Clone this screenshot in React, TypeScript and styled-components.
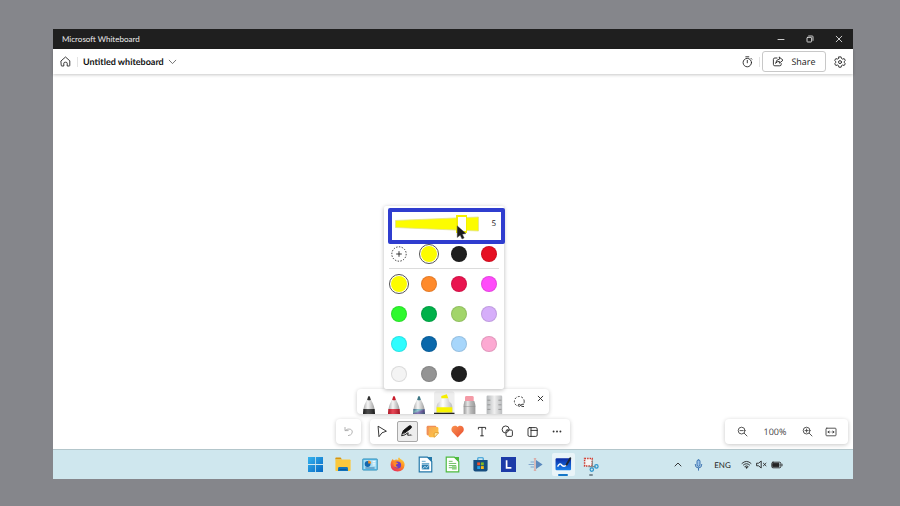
import React from "react";
import styled, { createGlobalStyle, css } from "styled-components";

const GlobalStyle = createGlobalStyle`
  * { box-sizing: border-box; }
  body {
    margin: 0;
    background: #85868b;
    font-family: "Open Sans", "Noto Sans", sans-serif;
    text-rendering: geometricPrecision;
    color: #242424;
  }
  button, input { font: inherit; color: inherit; margin: 0; text-rendering: inherit; }
  button { padding: 0; border: 0; background: none; cursor: pointer; }
`;

const Desktop = styled.div`
  min-height: 100vh;
  display: flex;
  padding: 29px 47px 27px 53px;
`;

const Screen = styled.div`
  flex: 1;
  min-width: 0;
  display: flex;
  flex-direction: column;
  background: #fff;
`;

const TitleBar = styled.header`
  display: flex;
  align-items: center;
  justify-content: space-between;
  height: 20px;
  padding: 0 0 0 9px;
  background: #1f1f1f;
  color: #ececec;
  font-family: Lato, "Open Sans", sans-serif;
  font-size: 8px;
  line-height: 12px;
`;

const WindowControls = styled.div`
  display: flex;
`;

const WindowButton = styled.button`
  width: 29px;
  height: 20px;
  display: grid;
  place-items: center;
  color: #e0e0e0;
`;

const AppHeader = styled.div`
  display: flex;
  align-items: center;
  height: 25px;
  padding: 0 5px 0 4px;
  background: #fff;
  box-shadow: 0 1px 3px rgba(0, 0, 0, 0.22);
`;

const HeaderGroup = styled.div<{ $end?: boolean }>`
  display: flex;
  align-items: center;
  margin-left: ${(p) => (p.$end ? "auto" : "0")};
`;

const IconButton = styled.button`
  width: 16px;
  height: 20px;
  display: grid;
  place-items: center;
`;

const Divider = styled.span<{ $tight?: boolean }>`
  width: 1px;
  height: 10px;
  margin: 0 ${(p) => (p.$tight ? 2 : 5)}px 0 4px;
  background: #e3e3e3;
`;

const BoardName = styled.button`
  display: flex;
  align-items: center;
  gap: 4px;
  font-family: Lato, "Open Sans", sans-serif;
  font-size: 9px;
  line-height: 14px;
  font-weight: 700;
  color: #111;
`;

const ShareButton = styled.button`
  display: flex;
  align-items: center;
  justify-content: center;
  gap: 7px;
  width: 64px;
  height: 21px;
  margin-right: 6px;
  border: 1px solid #c8c8c8;
  border-radius: 3px;
  font-size: 9px;
  line-height: 14px;
`;

const Canvas = styled.main`
  flex: 1;
  display: grid;
  grid-template-columns: 1fr auto 1fr;
  align-items: end;
  padding: 5px;
`;

const Dock = styled.div`
  grid-column: 2;
  display: flex;
  flex-direction: column;
  align-items: center;
`;

const floating = css`
  background: #fff;
  border-radius: 4px;
  box-shadow: 0 1px 4px rgba(0, 0, 0, 0.22);
`;

const PenPanel = styled.section`
  position: relative;
  z-index: 1;
  align-self: flex-start;
  width: 120px;
  margin-left: 48px;
  background: #fff;
  border-radius: 2px;
  box-shadow: 0 1px 4px rgba(0, 0, 0, 0.28);
`;

const SizeRow = styled.div`
  display: flex;
  align-items: center;
  height: 33px;
  padding: 3px 8px 0 11px;
  font-size: 8px;
  line-height: 12px;
`;

const SizeSlider = styled.div`
  display: grid;
  align-items: center;
  width: 84px;
  margin-right: auto;
  > * { grid-area: 1 / 1; }
`;

const SizeInput = styled.input`
  appearance: none;
  width: 84px;
  height: 18px;
  background: transparent;
  &::-webkit-slider-thumb {
    appearance: none;
    width: 11px;
    height: 18px;
    border: 2px solid #f4f000;
    border-right-width: 1px;
    background: #fff;
  }
`;

const SwatchGrid = styled.div<{ $divided?: boolean }>`
  display: grid;
  grid-template-columns: repeat(4, 1fr);
  grid-auto-rows: 30px;
  place-items: center;
  ${(p) =>
    p.$divided &&
    css`
      background: linear-gradient(#dcdcdc, #dcdcdc) center bottom / 110px 1px no-repeat;
    `}
`;

const Swatch = styled.input<{ $color: string }>`
  appearance: none;
  width: 16px;
  height: 16px;
  border-radius: 50%;
  border: 1px solid rgba(0, 0, 0, 0.1);
  background-color: ${(p) => p.$color};
  &:checked {
    width: 20px;
    height: 20px;
    padding: 1px;
    border-color: #555;
    background-clip: content-box;
  }
`;

const AddSwatch = styled.button`
  width: 16px;
  height: 16px;
  display: grid;
  place-items: center;
`;

const SizeHighlight = styled.div`
  position: absolute;
  left: 4px;
  top: 2px;
  width: 117px;
  height: 36px;
  border: 4px solid #2f3dcf;
  border-radius: 2px;
  pointer-events: none;
`;

const Pointer = styled.svg`
  position: absolute;
  left: 72px;
  top: 19px;
`;

const PenTray = styled.div`
  ${floating}
  display: flex;
  height: 25px;
  margin-bottom: 5px;
  overflow: hidden;
`;

const Tool = styled.button`
  width: 25px;
  height: 25px;
  display: grid;
  place-items: center;
`;

const CloseTray = styled.button`
  width: 17px;
  height: 18px;
  display: grid;
  place-items: center;
`;

const ToolRow = styled.div`
  display: flex;
  gap: 9px;
`;

const ToolBar = styled.div`
  ${floating}
  display: flex;
`;

const ToolFace = styled.span<{ $active?: boolean }>`
  width: 21px;
  height: 21px;
  display: grid;
  place-items: center;
  border-radius: 2px;
  border: 1px solid ${(p) => (p.$active ? "#a8a8a8" : "transparent")};
  background: ${(p) => (p.$active ? "#ededed" : "transparent")};
`;

const ZoomBar = styled.div`
  ${floating}
  grid-column: 3;
  justify-self: end;
  display: flex;
  align-items: center;
  justify-content: space-between;
  width: 123px;
  height: 25px;
  padding: 0 9px;
  font-size: 9px;
  line-height: 14px;
  color: #444;
`;

const ZoomGroup = styled.div`
  display: flex;
  gap: 7px;
`;

const TaskBar = styled.footer`
  display: grid;
  grid-template-columns: 1fr 303px 1fr;
  align-items: center;
  height: 30px;
  border-top: 1px solid #b3c6cb;
  background: #cfe7ee;
`;

const AppIcons = styled.nav`
  grid-column: 2;
  display: grid;
  grid-template-columns: repeat(11, 1fr);
  justify-items: center;
`;

const AppIcon = styled.button<{ $state?: "open" | "running" }>`
  position: relative;
  width: 23px;
  height: 23px;
  display: grid;
  place-items: center;
  border-radius: 2px;
  background: ${(p) => (p.$state === "open" ? "#e9f4f8" : "transparent")};
  ${(p) =>
    p.$state &&
    css`
      &::after {
        content: "";
        position: absolute;
        bottom: 0;
        width: ${p.$state === "open" ? 10 : 4}px;
        height: 2px;
        border-radius: 1px;
        background: ${p.$state === "open" ? "#1577c8" : "#7a8d96"};
      }
    `}
`;

const SystemTray = styled.div`
  grid-column: 3;
  display: flex;
  align-items: center;
  justify-content: flex-end;
  padding-right: 67px;
  font-family: Lato, "Open Sans", sans-serif;
  font-size: 8px;
  line-height: 12px;
`;

const TrayItem = styled.button<{ $wide: number }>`
  width: ${(p) => p.$wide}px;
  height: 20px;
  display: grid;
  place-items: center;
`;

const Line = styled.svg.attrs({ fill: "none", stroke: "currentColor", strokeLinecap: "round", strokeLinejoin: "round" })`
  display: block;
  stroke-width: 0.9;
`;

const Art = styled.svg`
  display: block;
`;

function Pen({ id, body, tip }: { id: string; body: string; tip: string }) {
  return (
    <Art width="25" height="25" viewBox="0 0 25 25">
      <defs>
        <linearGradient id={id}>
          <stop offset="0" stopColor="#adadad" />
          <stop offset=".4" stopColor="#f6f6f6" />
          <stop offset="1" stopColor="#9c9c9c" />
        </linearGradient>
        <linearGradient id="galaxy" x2="1" y2="1">
          <stop offset="0" stopColor="#3d6f9e" />
          <stop offset=".35" stopColor="#7ec4c9" />
          <stop offset=".6" stopColor="#6a51a8" />
          <stop offset="1" stopColor="#44708f" />
        </linearGradient>
        <linearGradient id="shade">
          <stop offset="0" stopColor="#000" stopOpacity=".25" />
          <stop offset=".4" stopColor="#fff" stopOpacity=".2" />
          <stop offset="1" stopColor="#000" stopOpacity=".3" />
        </linearGradient>
      </defs>
      <path d="M10.2 10.2 8 14.8Q6.8 17.4 6.4 20.2H17.6Q17.2 17.4 16 14.8L13.8 10.2Z" fill={`url(#${id})`} />
      <path d="M10.1 10.8 11.2 7.6Q12 6.2 12.8 7.6L13.9 10.8Q12 11.8 10.1 10.8Z" fill={tip} />
      <path d="M6.4 20H17.6L18 25H6Z" fill={body} />
      <path d="M6.4 20H17.6L18 25H6Z" fill="url(#shade)" />
    </Art>
  );
}

const Highlighter = () => (
  <Art width="25" height="25" viewBox="0 0 25 25">
    <defs>
      <linearGradient id="hl">
        <stop offset="0" stopColor="#c9c9c9" />
        <stop offset=".4" stopColor="#fff" />
        <stop offset="1" stopColor="#bdbdbd" />
      </linearGradient>
    </defs>
    <rect x="2" y="2.5" width="20.5" height="22.5" rx="2" fill="#eeeeee" />
    <path d="M9.3 9.6V7L14.8 5.2 16.4 9.6Z" fill="#f6ee00" />
    <path d="M8.6 9.4H16.4L17.2 12.6Q20 14.2 20.3 17V25H4.6V17Q4.8 14.2 7.8 12.6Z" fill="url(#hl)" />
    <path d="M4.6 18.3H20.3V23.6H4.6Z" fill="#f8f400" />
    <path d="M2 23.8H22.5V25H2Z" fill="#222" />
  </Art>
);

const Eraser = () => (
  <Art width="25" height="25" viewBox="0 0 25 25">
    <defs>
      <linearGradient id="metal">
        <stop offset="0" stopColor="#9a9a9a" />
        <stop offset=".35" stopColor="#e6e6e6" />
        <stop offset=".6" stopColor="#bababa" />
        <stop offset="1" stopColor="#989898" />
      </linearGradient>
    </defs>
    <path d="M8 12.5V8.4Q8 7 9.4 7H15.2Q16.7 7 16.7 8.4V12.5Z" fill="#f49aa6" />
    <path d="M7.4 12H17.3L18.4 16V25H6.6V16Z" fill="url(#metal)" />
    <path d="M6.6 17.5H18.4" stroke="#8c8c8c" strokeWidth=".5" />
  </Art>
);

const Ruler = () => (
  <Art width="25" height="25" viewBox="0 0 25 25">
    <defs>
      <linearGradient id="rule">
        <stop offset="0" stopColor="#b4b7b9" />
        <stop offset=".5" stopColor="#efefef" />
        <stop offset="1" stopColor="#babcbe" />
      </linearGradient>
    </defs>
    <rect x="4.6" y="6.6" width="15.6" height="19" rx="1.2" fill="url(#rule)" />
    <path d="M5.4 11.2h3M5.4 15.8h3M5.4 20.4h3M16.4 11.2h3M16.4 15.8h3M16.4 20.4h3" stroke="#8a8a8a" strokeWidth=".8" />
  </Art>
);

const Lasso = () => (
  <Line width="25" height="25" viewBox="0 0 25 25">
    <circle cx="12.3" cy="12.4" r="4.9" strokeDasharray="2 1.5" strokeLinecap="butt" />
    <path d="M10.6 13.8h6.4v4.4h-6.4z" fill="#fff" stroke="none" />
    <path d="M16.6 15.1Q14.4 15 13.4 16.4T11.6 17.2Q10.8 16.2 11.6 15.4T13.4 16.2Q14.6 17.8 16.6 17.6" />
  </Line>
);

const toolIcons: { label: string; active?: boolean; icon: React.ReactNode }[] = [
  { label: "Select", icon: <Line width="13" height="13" viewBox="0 0 13 13"><path d="M2.4 1.4 10.4 6.2 6 7.8 3.2 11.4Z" /></Line> },
  {
    label: "Inking",
    active: true,
    icon: (
      <Line width="15" height="15" viewBox="0 0 15 15">
        <path d="M2.4 9 3.4 6.6 9 2Q10.4 1.2 11.2 2.2T10.8 4.4L5 8.8Z" fill="#111" stroke="#111" />
        <path d="M2.4 9.2 1.6 11.8Q5 11.4 7.6 9 8.8 8.2 7.8 10T9.4 11.2 11.8 11" stroke="#111" />
      </Line>
    ),
  },
  {
    label: "Notes",
    icon: (
      <Art width="13" height="13" viewBox="0 0 13 13">
        <defs><linearGradient id="note" x2="1" y2="1"><stop offset="0" stopColor="#f6a552" /><stop offset="1" stopColor="#ffc943" /></linearGradient></defs>
        <path d="M2 .8H9Q10.4.8 10.4 2.2V10.4H2Q.6 10.4.6 9V2.2Q.6.8 2 .8Z" fill="#f08f57" />
        <path d="M4 2H11Q12.4 2 12.4 3.4V8L8.6 12.2H4Q2.6 12.2 2.6 10.8V3.4Q2.6 2 4 2Z" fill="url(#note)" />
        <path d="M12.4 7.6H9.4Q8.2 7.6 8.2 8.8V12.2H8.6L12.4 8.2Z" fill="#ffe89a" stroke="#d98a1c" strokeWidth=".7" />
      </Art>
    ),
  },
  {
    label: "Reactions",
    icon: (
      <Art width="14" height="13" viewBox="0 0 14 13">
        <defs><linearGradient id="heart" x2="1" y2="1"><stop offset="0" stopColor="#f9944f" /><stop offset="1" stopColor="#e84a30" /></linearGradient></defs>
        <path d="M6.6 2.1C5.4.2 2.8.2 1.4 1.8-.1 3.6.2 6 1.6 7.2L6.6 12.4 11.6 7.2C13 6 13.3 3.6 11.8 1.8 10.4.2 7.8.2 6.6 2.1Z" fill="url(#heart)" />
      </Art>
    ),
  },
  { label: "Text", icon: <Line width="11" height="11" viewBox="0 0 11 11"><path d="M1.4 3V1.4H8.6V3M5 1.4V9.8M3.6 9.8H6.4" /></Line> },
  {
    label: "Shapes",
    icon: (
      <Line width="13" height="13" viewBox="0 0 13 13">
        <path d="M4.2 8.1A3.6 3.6 0 1 1 8.3 4.2" />
        <rect x="5" y="5" width="6.4" height="6.4" rx="1.2" />
        <path d="M5 7.6A3.4 3.4 0 0 0 8 5" />
      </Line>
    ),
  },
  { label: "Templates", icon: <Line width="12" height="12" viewBox="0 0 12 12"><rect x="1" y="1.6" width="9.2" height="8.8" rx="1.4" /><path d="M4 1.6V10.4M4 4.4H10.2" /></Line> },
  { label: "More options", icon: <Art width="11" height="3" viewBox="0 0 11 3" fill="#333"><circle cx="1.6" cy="1.5" r=".95" /><circle cx="5" cy="1.5" r=".95" /><circle cx="8.4" cy="1.5" r=".95" /></Art> },
];

const doc = (color: string, inner: React.ReactNode) => (
  <Art width="15" height="17" viewBox="1 0 13 16">
    <path d="M1.6 1H9.2L13.4 5.2V15H1.6Z" fill="#fff" stroke={color} strokeWidth="1.1" />
    <path d="M9 1H13.6V5.4Z" fill={color} />
    {inner}
  </Art>
);

const apps: { label: string; state?: "open" | "running"; icon: React.ReactNode }[] = [
  {
    label: "Start",
    icon: (
      <Art width="15" height="15" viewBox="0 0 15 15">
        <defs><linearGradient id="win" x2="1" y2="1"><stop offset="0" stopColor="#35b3ee" /><stop offset="1" stopColor="#0669c4" /></linearGradient></defs>
        <path d="M0 0H7.1V7.1H0ZM7.9 0H15V7.1H7.9ZM0 7.9H7.1V15H0ZM7.9 7.9H15V15H7.9Z" fill="url(#win)" />
      </Art>
    ),
  },
  {
    label: "File Explorer",
    icon: (
      <Art width="16" height="15" viewBox="0 0 16 15">
        <path d="M.4 1.2Q.4.6 1 .6H5.6L7 2.4H.4Z" fill="#d8950c" />
        <path d="M.4 2.4H14.8Q15.6 2.4 15.6 3.2V13.2Q15.6 14 14.8 14H1.2Q.4 14 .4 13.2Z" fill="#fbc83c" />
        <path d="M3 14V11.4Q3 10 4.4 10H11.6Q13 10 13 11.4V14Z" fill="#1274bd" />
        <path d="M4.4 12.6H11.6" stroke="#064c86" strokeWidth=".7" />
      </Art>
    ),
  },
  {
    label: "Control Panel",
    icon: (
      <Art width="16" height="13" viewBox="0 0 16 13">
        <rect x=".5" y=".8" width="15" height="11.4" rx="1" fill="#4fb5e4" stroke="#4796b9" strokeWidth=".7" />
        <rect x="1.6" y="2" width="12.8" height="9" fill="#a7ddf3" />
        <circle cx="5.6" cy="6" r="2.9" fill="#1467ad" />
        <path d="M6.2 5.4V2.4A3 3 0 0 1 9.2 5.4Z" fill="#f18a26" />
        <path d="M10.6 3.4H13.4M10.6 5.2H13.4M10.6 7H13.4" stroke="#fff" strokeWidth=".9" />
        <path d="M3.4 10H12.6" stroke="#3474a8" strokeWidth="1" />
      </Art>
    ),
  },
  {
    label: "Firefox",
    icon: (
      <Art width="15" height="15" viewBox="0 0 15 15">
        <defs>
          <linearGradient id="fox" x1=".8" y1="0" x2=".2" y2="1"><stop offset="0" stopColor="#ffd83b" /><stop offset=".45" stopColor="#ff8a22" /><stop offset="1" stopColor="#e72360" /></linearGradient>
        </defs>
        <path d="M1.4 4 2.6 2 4 3.4Q6 2 8.4 3 7.6 1.2 9 .2 10 2 11.6 2.8 14.8 4.6 14.6 8.2 14 14.2 7.6 14.6 1 14.2.6 8Q.6 5.4 1.4 4Z" fill="url(#fox)" />
        <circle cx="7.6" cy="8" r="3.5" fill="#6c3cc4" />
        <path d="M3.2 5.2Q5.4 4.4 6.8 5.6L8.2 6.4Q7 7.2 6 7.4 5.6 9.6 8.4 10 5 11.6 3.8 8.8Z" fill="#ff8b25" />
      </Art>
    ),
  },
  { label: "LibreOffice Writer", icon: doc("#2277a8", <><path d="M4 5H7.6M4 7H11" stroke="#4f9bc4" strokeWidth=".8" /><rect x="4" y="8" width="7" height="4.6" fill="#2d7fb0" /><path d="M4.6 12 7 9.8 8.4 11 10.6 9" stroke="#d9f0fa" strokeWidth=".8" fill="none" /></>) },
  { label: "LibreOffice Calc", icon: doc("#4dbb3e", <><path d="M4 5H7.6M4 7H11M4 9H11M4 11H11" stroke="#68bd5c" strokeWidth=".9" /><rect x="7" y="9.6" width="4.4" height="3.2" fill="#8fd184" /></>) },
  {
    label: "Microsoft Store",
    icon: (
      <Art width="15" height="15" viewBox="0 0 15 15">
        <path d="M4.8 3V1.4Q4.8.8 5.4.8H9.6Q10.2.8 10.2 1.4V3" fill="none" stroke="#2e9ad6" strokeWidth="1.1" />
        <path d="M.4 3H14.6V12.6Q14.6 14.6 12.6 14.6H2.4Q.4 14.6.4 12.6Z" fill="#164e80" />
        <path d="M4.2 5.4H7.1V8.3H4.2Z" fill="#f0502a" /><path d="M7.9 5.4H10.8V8.3H7.9Z" fill="#82bb23" />
        <path d="M4.2 9.1H7.1V12H4.2Z" fill="#22a2ea" /><path d="M7.9 9.1H10.8V12H7.9Z" fill="#fbb915" />
      </Art>
    ),
  },
  { label: "L", icon: <Art width="15" height="15" viewBox="0 0 15 15"><rect width="15" height="15" fill="#1c3ba8" /><path d="M5.6 3.2V10.8H10.4" fill="none" stroke="#fff" strokeWidth="1.7" /></Art> },
  {
    label: "Media tool",
    icon: (
      <Art width="15" height="13" viewBox="0 0 15 13">
        <path d="M8 2 14.6 6.5 8 11Z" fill="#5b89bd" />
        <path d="M2.6 4H6M.6 6.5H6M2.6 9H6" stroke="#82a6cd" strokeWidth="1.1" />
        <path d="M7 .8V12.2M5.8.8H8.2M5.8 12.2H8.2" stroke="#dc9b94" strokeWidth="1.1" />
      </Art>
    ),
  },
  {
    label: "Microsoft Whiteboard",
    state: "open",
    icon: (
      <Art width="17" height="15" viewBox="0 0 16 14">
        <defs><linearGradient id="wb" x2="0" y2="1"><stop offset="0" stopColor="#0a2aa4" /><stop offset="1" stopColor="#1b80ea" /></linearGradient></defs>
        <rect x=".5" y="1.2" width="14.6" height="11.2" rx="1" fill="url(#wb)" />
        <path d="M2.4 9Q4.6 5.2 5.8 7T8.6 8.6 11 7.4" fill="none" stroke="#fff" strokeWidth="1.3" />
        <path d="M10.8 7.2 14.4 1.2" stroke="#1f2733" strokeWidth="1.8" strokeLinecap="round" />
      </Art>
    ),
  },
  {
    label: "Snipping Tool",
    state: "running",
    icon: (
      <Art width="16" height="16" viewBox="0 0 16 16">
        <rect x="1.6" y="1.4" width="7.6" height="7.6" fill="#f5f5f5" stroke="#cf3b2f" strokeWidth="1.5" strokeDasharray="1.5 1" />
        <path d="M9.4 3.6V10.4M5.6 9.6H12.6" stroke="#888" strokeWidth="1.1" />
        <circle cx="8.8" cy="12.6" r="1.7" fill="none" stroke="#2a94cc" strokeWidth="1.2" />
        <circle cx="13.4" cy="9.4" r="1.7" fill="none" stroke="#2a94cc" strokeWidth="1.2" />
      </Art>
    ),
  },
];

const palette: [string, string][] = [
  ["Yellow", "#fcfc00"], ["Orange", "#ff8a2b"], ["Crimson", "#e9144f"], ["Magenta", "#ff4bfa"],
  ["Lime", "#2df92d"], ["Green", "#00b14a"], ["Light green", "#a2d56a"], ["Lavender", "#d6aefa"],
  ["Cyan", "#2dfdff"], ["Blue", "#0a68ab"], ["Light blue", "#a7d6fb"], ["Pink", "#fca9d2"],
  ["White", "#f4f4f4"], ["Gray", "#949494"], ["Black", "#1f1f1f"],
];

const recent: [string, string][] = [["Yellow", "#fcfc00"], ["Black", "#1f1f1f"], ["Red", "#e60f22"]];

export default function App() {
  return (
    <>
      <GlobalStyle />
      <Desktop>
        <Screen>
          <TitleBar>
            <span>Microsoft Whiteboard</span>
            <WindowControls>
              <WindowButton aria-label="Minimize"><Line width="8" height="8" viewBox="0 0 8 8"><path d="M1 4.5H7" /></Line></WindowButton>
              <WindowButton aria-label="Restore"><Line width="8" height="8" viewBox="0 0 8 8"><rect x="1" y="2.4" width="4.6" height="4.6" rx=".6" /><path d="M2.6 1H6.2Q7 1 7 1.8V5.4" /></Line></WindowButton>
              <WindowButton aria-label="Close"><Line width="8" height="8" viewBox="0 0 8 8"><path d="M1.2 1.2 6.8 6.8M6.8 1.2 1.2 6.8" /></Line></WindowButton>
            </WindowControls>
          </TitleBar>
          <AppHeader>
            <HeaderGroup>
              <IconButton aria-label="Home">
                <Line width="11" height="11" viewBox="0 0 11 11"><path d="M1.2 4.8 5.5 1 9.8 4.8V9.4Q9.8 10 9.2 10H7.2V7.2Q7.2 6.2 5.5 6.2T3.8 7.2V10H1.8Q1.2 10 1.2 9.4Z" /></Line>
              </IconButton>
              <Divider />
              <BoardName>
                Untitled whiteboard
                <Line width="9" height="6" viewBox="0 0 9 6"><path d="M1.2 1.2 4.5 4.6 7.8 1.2" stroke="#666" /></Line>
              </BoardName>
            </HeaderGroup>
            <HeaderGroup $end>
              <IconButton aria-label="Timer">
                <Line width="11" height="12" viewBox="0 0 11 12"><circle cx="5.3" cy="6.6" r="4.2" /><path d="M3.8.8H6.8M5.3 4.4V6.8M9 2.4 9.8 3.2" /></Line>
              </IconButton>
              <Divider $tight />
              <ShareButton>
                <Line width="12" height="11" viewBox="0 0 12 11"><path d="M5 2H2.8Q1.4 2 1.4 3.4V8.4Q1.4 9.8 2.8 9.8H7.8Q9.2 9.8 9.2 8.4V7.6" /><path d="M7.4 1.2 11 4.2 7.4 7.2V5.4Q5 5.2 3.6 7.4 4 3.4 7.4 3Z" /></Line>
                Share
              </ShareButton>
              <IconButton aria-label="Settings">
                <Line width="12" height="12" viewBox="0 0 12 12">
                  <path d="M4.9.9H7.1L7.5 2.5 8.6 3.1 10.2 2.6 11.3 4.5 10.1 5.7V6.5L11.3 7.6 10.2 9.5 8.6 9 7.5 9.6 7.1 11.2H4.9L4.5 9.6 3.4 9 1.8 9.5.7 7.6 1.9 6.5V5.7L.7 4.5 1.8 2.6 3.4 3.1 4.5 2.5Z" />
                  <circle cx="6" cy="6.1" r="1.5" />
                </Line>
              </IconButton>
            </HeaderGroup>
          </AppHeader>
          <Canvas>
            <Dock>
              <PenPanel aria-label="Highlighter options">
                <SizeRow>
                  <SizeSlider>
                    <Art width="84" height="18" viewBox="0 0 84 18">
                      <path d="M.5 5.5 83.5 2V16L.5 12.5Z" fill="#fcfc00" stroke="#e2e28c" strokeWidth=".8" />
                    </Art>
                    <SizeInput type="range" min="0" max="6" defaultValue="5" aria-label="Thickness" />
                  </SizeSlider>
                  <output>5</output>
                </SizeRow>
                <SwatchGrid $divided>
                  <AddSwatch aria-label="Add color">
                    <Line width="16" height="16" viewBox="0 0 16 16"><circle cx="8" cy="8" r="7.2" strokeDasharray="1.4 1.4" strokeLinecap="butt" /><path d="M5.6 8H10.4M8 5.6V10.4" /></Line>
                  </AddSwatch>
                  {recent.map(([name, color], i) => (
                    <Swatch key={name} type="radio" name="recent" aria-label={name} $color={color} defaultChecked={i === 0} />
                  ))}
                </SwatchGrid>
                <SwatchGrid>
                  {palette.map(([name, color], i) => (
                    <Swatch key={name} type="radio" name="palette" aria-label={name} $color={color} defaultChecked={i === 0} />
                  ))}
                </SwatchGrid>
                <SizeHighlight />
                <Pointer width="11" height="15" viewBox="0 0 11 15"><path d="M1.2.8 10 8.6 6.4 9.2 8.2 13 6 14 4.2 10.2 1.2 12.6Z" fill="#1c1c1c" stroke="#555" strokeWidth=".4" /></Pointer>
              </PenPanel>
              <PenTray>
                <Tool aria-label="Black pen"><Pen id="p1" body="#222" tip="#333" /></Tool>
                <Tool aria-label="Red pen"><Pen id="p2" body="#e0182b" tip="#c81d2b" /></Tool>
                <Tool aria-label="Galaxy pen"><Pen id="p3" body="url(#galaxy)" tip="#3f7886" /></Tool>
                <Tool aria-label="Highlighter"><Highlighter /></Tool>
                <Tool aria-label="Eraser"><Eraser /></Tool>
                <Tool aria-label="Ruler"><Ruler /></Tool>
                <Tool aria-label="Lasso select"><Lasso /></Tool>
                <CloseTray aria-label="Close"><Line width="7" height="7" viewBox="0 0 7 7"><path d="M1.2 1.2 5.8 5.8M5.8 1.2 1.2 5.8" /></Line></CloseTray>
              </PenTray>
              <ToolRow>
                <ToolBar>
                  <Tool aria-label="Undo">
                    <Line width="11" height="11" viewBox="0 0 11 11"><path d="M2 1.4V4.6H5.2M2.2 4.4Q5 2.2 7.6 3.2 10.2 4.6 9 7.4 8 9.2 5.4 9.6" stroke="#aaa" /></Line>
                  </Tool>
                </ToolBar>
                <ToolBar>
                  {toolIcons.map((t) => (
                    <Tool key={t.label} aria-label={t.label}><ToolFace $active={t.active}>{t.icon}</ToolFace></Tool>
                  ))}
                </ToolBar>
              </ToolRow>
            </Dock>
            <ZoomBar>
              <IconButton aria-label="Zoom out"><Line width="11" height="11" viewBox="0 0 11 11"><circle cx="4.6" cy="4.6" r="3.4" /><path d="M3 4.6H6.2M7.2 7.2 10 10" /></Line></IconButton>
              <span>100%</span>
              <ZoomGroup>
                <IconButton aria-label="Zoom in"><Line width="11" height="11" viewBox="0 0 11 11"><circle cx="4.6" cy="4.6" r="3.4" /><path d="M3 4.6H6.2M4.6 3V6.2M7.2 7.2 10 10" /></Line></IconButton>
                <IconButton aria-label="Fit to screen"><Line width="12" height="10" viewBox="0 0 12 10"><rect x="1" y="1.2" width="10" height="7.6" rx=".8" /><path d="M3 5H5M9 5H7M4 4 3 5 4 6M8 4 9 5 8 6" /></Line></IconButton>
              </ZoomGroup>
            </ZoomBar>
          </Canvas>
          <TaskBar>
            <AppIcons aria-label="Taskbar">
              {apps.map((a) => (
                <AppIcon key={a.label} aria-label={a.label} $state={a.state}>{a.icon}</AppIcon>
              ))}
            </AppIcons>
            <SystemTray>
              <TrayItem $wide={20} aria-label="Show hidden icons"><Line width="8" height="5" viewBox="0 0 8 5"><path d="M1 4 4 1 7 4" /></Line></TrayItem>
              <TrayItem $wide={20} aria-label="Microphone">
                <Line width="9" height="12" viewBox="0 0 9 12"><rect x="3" y=".8" width="3" height="6.6" rx="1.5" fill="#9cc3ea" stroke="#2f69ab" /><path d="M1.2 5.4Q1.2 9 4.5 9T7.8 5.4M4.5 9V11.2" stroke="#2f69ab" /></Line>
              </TrayItem>
              <TrayItem $wide={29}>ENG</TrayItem>
              <TrayItem $wide={18} aria-label="Wi-Fi">
                <Line width="11" height="9" viewBox="0 0 11 9"><path d="M1 3.4Q5.5-.8 10 3.4M2.4 5Q5.5 2.2 8.6 5M3.8 6.5Q5.5 5 7.2 6.5" /><circle cx="5.5" cy="7.7" r=".5" fill="currentColor" /></Line>
              </TrayItem>
              <TrayItem $wide={12} aria-label="Volume muted">
                <Line width="11" height="9" viewBox="0 0 11 9"><path d="M1 3.2H2.6L5.2 1V8L2.6 5.8H1ZM7.4 3.2 10 5.8M10 3.2 7.4 5.8" /></Line>
              </TrayItem>
              <TrayItem $wide={19} aria-label="Battery">
                <Line width="12" height="8" viewBox="0 0 12 8"><rect x=".8" y="1.2" width="9" height="5.6" rx="1.2" /><rect x="2" y="2.4" width="6" height="3.2" fill="currentColor" /><path d="M11 3.2V4.8" /></Line>
              </TrayItem>
            </SystemTray>
          </TaskBar>
        </Screen>
      </Desktop>
    </>
  );
}
